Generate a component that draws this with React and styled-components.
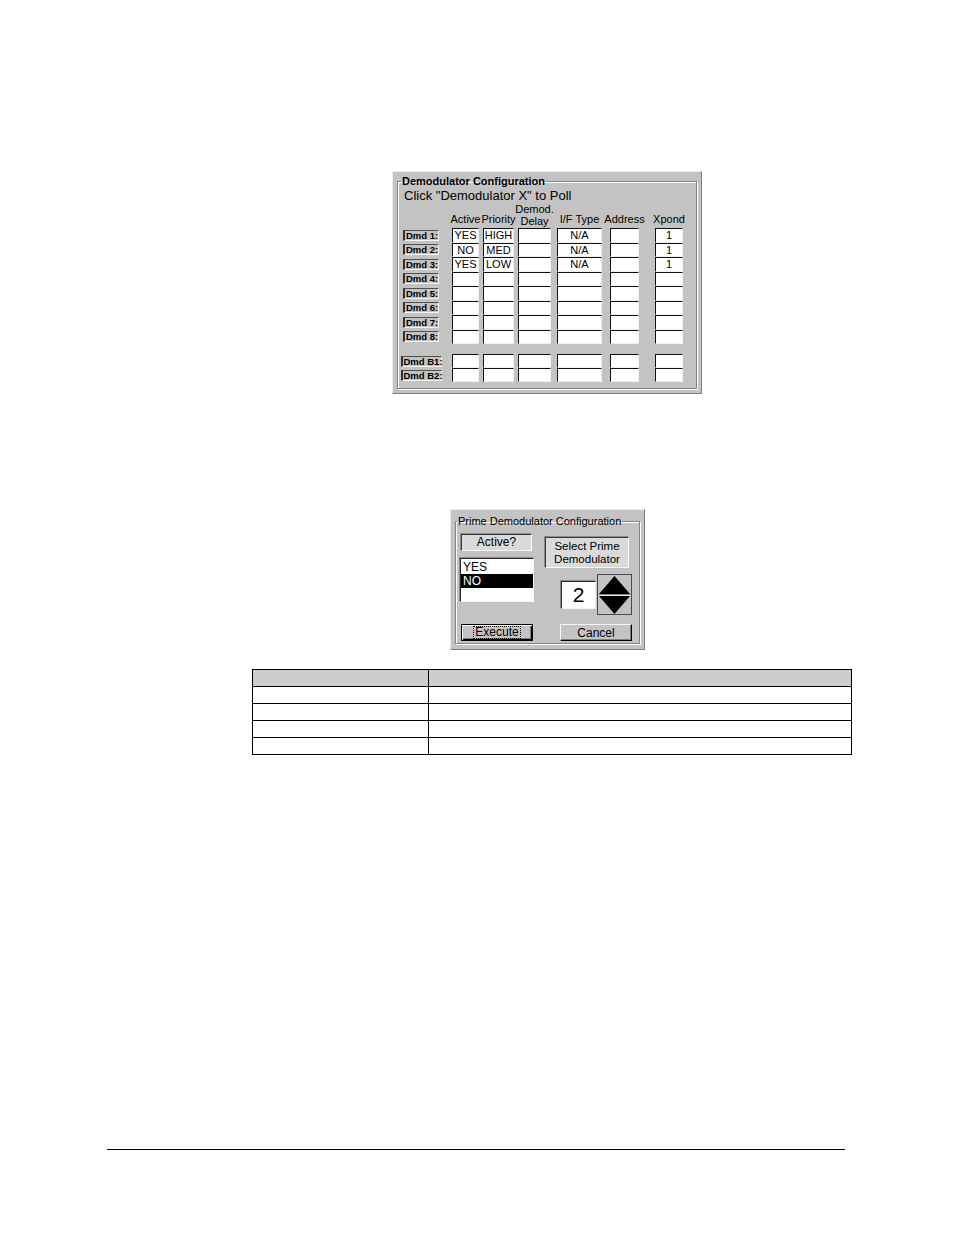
import React from 'react';
import styled, { createGlobalStyle } from 'styled-components';

const GlobalStyle = createGlobalStyle`
  html, body {
    margin: 0;
    padding: 0;
    background: #fff;
  }
  body {
    font-family: "Liberation Sans", Arial, sans-serif;
    color: #000;
  }
`;

const Page = styled.div`
  width: 954px;
  height: 1235px;
  display: flex;
  flex-direction: column;
  align-items: flex-start;
  overflow: hidden;
`;

const Window = styled.div`
  box-sizing: border-box;
  width: ${(p) => p.$w}px;
  margin-left: ${(p) => p.$left}px;
  margin-top: ${(p) => p.$top}px;
  padding: ${(p) => p.$pad};
  background: #c3c3c3;
  border: 1px solid;
  border-color: #ececec #7c7c7c #7c7c7c #ececec;
`;

const Group = styled.fieldset`
  margin: 0;
  padding: ${(p) => p.$pad};
  min-width: 0;
  border: 1px solid #858585;
  box-shadow: inset 1px 1px 0 #fff, 1px 1px 0 #fff;
`;

const Legend = styled.legend`
  padding: 0 1px;
  margin-left: ${(p) => p.$ml || 1}px;
  font-size: 11px;
  line-height: 12px;
  font-weight: ${(p) => (p.$bold ? 700 : 400)};
`;

/* ---------- Demodulator grid ---------- */

const Caption = styled.div`
  font-size: 13px;
  line-height: 15px;
  padding-left: 4px;
  margin-top: 1px;
  white-space: nowrap;
`;

const HeaderRow = styled.div`
  display: flex;
  align-items: flex-end;
  height: 24px;
  margin-bottom: 1px;
`;

const HeaderCell = styled.div`
  width: ${(p) => p.$w}px;
  margin-left: ${(p) => p.$ml}px;
  padding-bottom: ${(p) => (p.$stacked ? 0 : 2)}px;
  display: flex;
  justify-content: center;
  font-size: 11px;
  line-height: 12px;
  text-align: center;
  white-space: nowrap;
`;

const Row = styled.div`
  display: flex;
  align-items: stretch;
  height: ${(p) => p.$h}px;
  margin-top: ${(p) => p.$mt || 0}px;
`;

const LabelSlot = styled.div`
  width: 42px;
  display: flex;
  align-items: center;
  justify-content: center;
`;

const RowLabel = styled.div`
  box-sizing: border-box;
  width: ${(p) => p.$w}px;
  height: 11px;
  padding-left: 1px;
  font-size: 9.5px;
  line-height: 9px;
  font-weight: 700;
  white-space: nowrap;
  background: #c3c3c3;
  border-style: solid;
  border-width: 1px 1px 1px 2px;
  border-color: #505050 #f4f4f4 #f4f4f4 #303030;
`;

const Cell = styled.div`
  box-sizing: border-box;
  width: ${(p) => p.$w}px;
  margin-left: ${(p) => p.$ml}px;
  background: #fff;
  border: 1px solid;
  border-color: #111 #f0f0f0 #f0f0f0 #111;
  font-size: 11px;
  line-height: 12px;
  text-align: center;
  white-space: nowrap;
  overflow: hidden;
`;

const columns = [
  { w: 27, ml: 10 },
  { w: 31, ml: 4 },
  { w: 33, ml: 4 },
  { w: 45, ml: 6 },
  { w: 29, ml: 8 },
  { w: 28, ml: 16 },
];

const headers = ['Active', 'Priority', ['Demod.', 'Delay'], 'I/F Type', 'Address', 'Xpond'];

const demods = [
  { name: 'Dmd 1:', values: ['YES', 'HIGH', '', 'N/A', '', '1'] },
  { name: 'Dmd 2:', values: ['NO', 'MED', '', 'N/A', '', '1'] },
  { name: 'Dmd 3:', values: ['YES', 'LOW', '', 'N/A', '', '1'] },
  { name: 'Dmd 4:', values: [] },
  { name: 'Dmd 5:', values: [] },
  { name: 'Dmd 6:', values: [] },
  { name: 'Dmd 7:', values: [] },
  { name: 'Dmd 8:', values: [] },
];

const backups = ['Dmd B1:', 'Dmd B2:'];

const DemodRow = ({ name, values = [], labelWidth, h, mt }) => (
  <Row $h={h} $mt={mt}>
    <LabelSlot>
      <RowLabel $w={labelWidth}>{name}</RowLabel>
    </LabelSlot>
    {columns.map((c, i) => (
      <Cell key={i} $w={c.w} $ml={c.ml}>
        {values[i] || ''}
      </Cell>
    ))}
  </Row>
);

const DemodulatorConfig = () => (
  <Window $w={310} $left={392} $top={171} $pad="3px 4px 4px 4px">
    <Group $pad="0 2px 6px 2px">
      <Legend $bold $ml={1}>Demodulator Configuration</Legend>
      <Caption>Click "Demodulator X" to Poll</Caption>
      <HeaderRow>
        <LabelSlot />
        {columns.map((c, i) => {
          const stacked = Array.isArray(headers[i]);
          return (
            <HeaderCell key={i} $w={c.w} $ml={c.ml} $stacked={stacked}>
              {stacked ? (
                <span>
                  {headers[i][0]}
                  <br />
                  {headers[i][1]}
                </span>
              ) : (
                headers[i]
              )}
            </HeaderCell>
          );
        })}
      </HeaderRow>
      {demods.map((d) => (
        <DemodRow key={d.name} name={d.name} values={d.values} labelWidth={36} h={14.5} />
      ))}
      {backups.map((b, i) => (
        <DemodRow key={b} name={b} labelWidth={41} h={14} mt={i === 0 ? 10 : 0} />
      ))}
    </Group>
  </Window>
);

/* ---------- Prime demodulator dialog ---------- */

const Split = styled.div`
  display: grid;
  grid-template-columns: 74px 87px;
  column-gap: 11px;
  padding-left: 4px;
`;

const Column = styled.div`
  display: flex;
  flex-direction: column;
  align-items: ${(p) => p.$align || 'stretch'};
`;

const InfoBox = styled.div`
  box-sizing: border-box;
  width: ${(p) => p.$w}px;
  height: ${(p) => p.$h}px;
  margin-top: ${(p) => p.$mt}px;
  margin-left: ${(p) => p.$ml || 0}px;
  display: flex;
  align-items: center;
  justify-content: center;
  text-align: center;
  font-size: ${(p) => p.$fs || 12}px;
  line-height: 13px;
  background: #dadada;
  border: 1px solid;
  border-color: #3a3a3a #fafafa #fafafa #3a3a3a;
  box-shadow: -1px -1px 0 #8a8a8a;
`;

const ListBox = styled.div`
  box-sizing: border-box;
  height: 44px;
  margin-top: 7px;
  background: #fff;
  border: 1px solid;
  border-color: #2a2a2a #f4f4f4 #f4f4f4 #2a2a2a;
  box-shadow: -1px -1px 0 #8a8a8a;
  padding-top: 1px;
`;

const ListItem = styled.div`
  height: 14px;
  padding-left: 2px;
  font-size: 12px;
  line-height: 14px;
  background: ${(p) => (p.$selected ? '#000' : 'transparent')};
  color: ${(p) => (p.$selected ? '#fff' : '#000')};
`;

const SpinRow = styled.div`
  display: flex;
  align-self: flex-end;
  align-items: center;
  gap: 1px;
  margin-top: 6px;
`;

const NumberBox = styled.div`
  box-sizing: border-box;
  width: 35px;
  height: 28px;
  background: #fff;
  border: 1px solid;
  border-color: #2a2a2a #f4f4f4 #f4f4f4 #2a2a2a;
  box-shadow: -1px -1px 0 #8a8a8a;
  display: flex;
  align-items: center;
  justify-content: center;
  font-size: 21px;
  line-height: 21px;
`;

const Spinner = styled.div`
  box-sizing: border-box;
  width: 35px;
  height: 41px;
  border: 1px solid #4a4a4a;
  background: #c3c3c3;
  display: flex;

  svg {
    display: block;
  }
`;

const ButtonRow = styled.div`
  display: grid;
  grid-template-columns: 74px 87px;
  column-gap: 11px;
  padding-left: 4px;
  margin-top: 9px;
`;

const Button = styled.div`
  box-sizing: border-box;
  width: 72px;
  height: 17px;
  margin-left: ${(p) => p.$ml}px;
  display: flex;
  align-items: center;
  justify-content: center;
  font-size: 12px;
  line-height: 12px;
  background: #c3c3c3;
  border: 1px solid;
  border-color: ${(p) => (p.$default ? '#000' : '#f8f8f8 #000 #000 #f8f8f8')};
  box-shadow: ${(p) =>
    p.$default
      ? 'inset 1px 1px 0 #f8f8f8, inset -1px -1px 0 #000, inset -2px -2px 0 #808080'
      : 'inset -1px -1px 0 #808080'};
`;

const FocusText = styled.span`
  padding: 0 1px;
  outline: 1px dotted #000;
  outline-offset: 0;
  line-height: 11px;
`;

const SpinArrows = () => (
  <svg width="33" height="39" viewBox="0 0 33 39">
    <polygon points="16.5,1 32,19 1,19" fill="#000" />
    <rect x="0" y="19" width="33" height="1" fill="#8a8a8a" />
    <rect x="0" y="20" width="33" height="1" fill="#e6e6e6" />
    <polygon points="1,21 32,21 16.5,39" fill="#000" />
  </svg>
);

const PrimeConfig = () => (
  <Window $w={195} $left={450} $top={115} $pad="5px 4px 5px 4px">
    <Group $pad="0 0 2px 0">
      <Legend $ml={1}>Prime Demodulator Configuration</Legend>
      <Split>
        <Column>
          <InfoBox $w={71} $h={17} $mt={7} $ml={1}>
            Active?
          </InfoBox>
          <ListBox>
            <ListItem>YES</ListItem>
            <ListItem $selected>NO</ListItem>
          </ListBox>
        </Column>
        <Column $align="flex-start">
          <InfoBox $w={84} $h={31} $mt={10} $fs={11.5}>
            Select Prime
            <br />
            Demodulator
          </InfoBox>
          <SpinRow>
            <NumberBox>2</NumberBox>
            <Spinner>
              <SpinArrows />
            </Spinner>
          </SpinRow>
        </Column>
      </Split>
      <ButtonRow>
        <Button $default $ml={1}>
          <FocusText>Execute</FocusText>
        </Button>
        <Button $ml={15}>Cancel</Button>
      </ButtonRow>
    </Group>
  </Window>
);

/* ---------- Blank parameter table ---------- */

const Table = styled.table`
  margin-left: 252px;
  margin-top: 19px;
  width: 600px;
  border-collapse: collapse;

  td,
  th {
    border: 1px solid #000;
    height: 16px;
    padding: 0;
  }

  th {
    background: #cdcdcd;
  }
`;

const Rule = styled.div`
  margin-left: 107px;
  margin-top: 394px;
  width: 738px;
  height: 0;
  border-top: 1.5px solid #000;
`;

const App = () => (
  <Page>
    <GlobalStyle />
    <DemodulatorConfig />
    <PrimeConfig />
    <Table>
      <colgroup>
        <col style={{ width: 176 }} />
        <col />
      </colgroup>
      <thead>
        <tr>
          <th />
          <th />
        </tr>
      </thead>
      <tbody>
        {[0, 1, 2, 3].map((r) => (
          <tr key={r}>
            <td />
            <td />
          </tr>
        ))}
      </tbody>
    </Table>
    <Rule />
  </Page>
);

export default App;
